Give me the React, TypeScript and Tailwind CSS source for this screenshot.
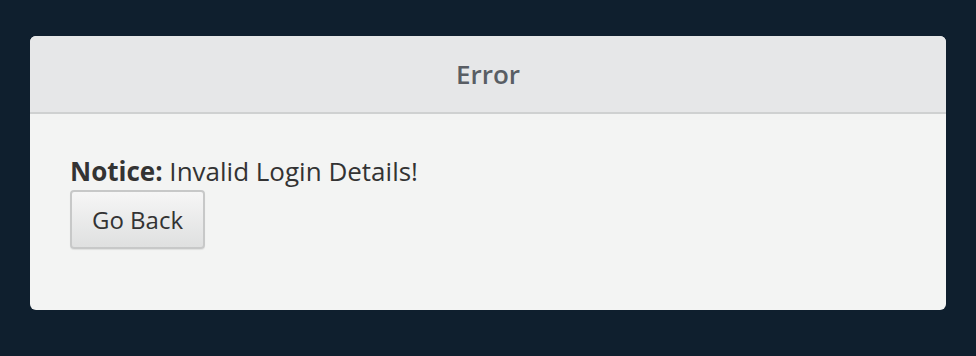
export default function App() {
  return (
    <div className="w-[976px] h-[356px] bg-[#0f1f2e] pt-9 px-[30px] font-['Open_Sans',sans-serif]">
      <div className="rounded-md overflow-hidden bg-[#f3f4f3]">
        <div className="h-[78px] bg-[#e6e7e8] border-b-2 border-[#cfd1d1] flex items-center justify-center">
          <h1 className="text-[26px] font-semibold text-[#595e64]">Error</h1>
        </div>
        <div className="px-10 pt-[39px] pb-[61px] text-[#333]">
          <p className="text-[26px] leading-[36px]">
            <span className="font-bold">Notice:</span> Invalid Login Details!
          </p>
          <button className="mt-[1px] h-[59px] w-[135px] rounded-[4px] border-2 border-[#c7c8c8] bg-gradient-to-b from-[#f6f6f6] to-[#dfe0e0] text-[24px] text-[#333] shadow-[0_1px_1px_rgba(0,0,0,0.08)]">
            Go Back
          </button>
        </div>
      </div>
    </div>
  );
}
